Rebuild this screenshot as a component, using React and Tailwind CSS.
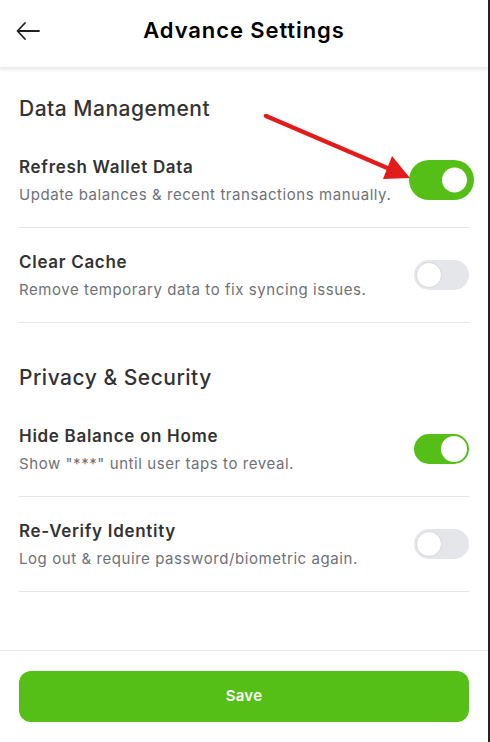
import { useState } from "react";

const FONT = { fontFamily: "Inter, 'Open Sans', sans-serif" };

function Toggle({ on, big, onClick }) {
  return (
    <button
      onClick={onClick}
      className={`relative block shrink-0 rounded-full transition-colors ${big ? "h-[40px] w-[65px]" : "h-[30px] w-[55px]"} ${on ? "bg-[#56bf17]" : "bg-[#e5e6ea]"}`}
    >
      <span
        className={`absolute top-1/2 -translate-y-1/2 rounded-full bg-white ${big ? "h-[25px] w-[25px]" : "h-[26px] w-[26px]"} ${on ? (big ? "right-[7px]" : "right-[2px]") : "left-[2px] border border-[#d8d9de]"}`}
      />
    </button>
  );
}

function Row({ title, desc, on, big, onToggle }) {
  return (
    <div className="flex items-center justify-between border-b border-[#e6e6e6] pt-[22px] pb-[22px]">
      <div>
        <p className="text-[17px] leading-[24px] font-semibold tracking-[0.7px] text-[#333]">{title}</p>
        <p className="mt-[6px] text-[15px] leading-[20px] tracking-[0.57px] text-[#6f7177]">{desc}</p>
      </div>
      <div className={`flex ${big ? "-mr-[5px]" : ""}`}>
        <Toggle on={on} big={big} onClick={onToggle} />
      </div>
    </div>
  );
}

export default function App() {
  const [s, setS] = useState({ refresh: true, cache: false, hide: true, verify: false });
  const flip = k => setS(p => ({ ...p, [k]: !p[k] }));
  return (
    <div style={FONT} className="relative flex h-[742px] w-[490px] flex-col overflow-hidden border-r-2 border-[#222] bg-white">
      <div className="relative z-10 flex h-[68px] shrink-0 items-center justify-center border-b border-[#ececec] pb-[6px] shadow-[0_2px_3px_rgba(0,0,0,0.08)]">
        <svg className="absolute left-[16px] top-[21px]" width="24" height="20" viewBox="0 0 24 20" fill="none" stroke="#222" strokeWidth="1.8" strokeLinecap="round" strokeLinejoin="round">
          <path d="M23 10H2M9 2L1.5 10 9 18" />
        </svg>
        <h1 className="text-[22px] font-semibold tracking-[0.9px] text-black">Advance Settings</h1>
      </div>

      <div className="flex-1 px-[19px]">
        <h2 className="mt-[27px] mb-[10px] text-[21px] leading-[28px] font-medium tracking-[0.5px] text-[#333]">Data Management</h2>
        <Row title="Refresh Wallet Data" desc="Update balances & recent transactions manually." on={s.refresh} big onToggle={() => flip("refresh")} />
        <Row title="Clear Cache" desc="Remove temporary data to fix syncing issues." on={s.cache} onToggle={() => flip("cache")} />

        <h2 className="mt-[41px] mb-[10px] text-[21px] leading-[28px] font-medium tracking-[0.5px] text-[#333]">Privacy &amp; Security</h2>
        <Row title="Hide Balance on Home" desc={'Show "***" until user taps to reveal.'} on={s.hide} onToggle={() => flip("hide")} />
        <Row title="Re-Verify Identity" desc="Log out & require password/biometric again." on={s.verify} onToggle={() => flip("verify")} />
      </div>

      <div className="shrink-0 border-t border-[#e6e6e6] px-[19px] pt-[20px] pb-[20px]">
        <button className="h-[51px] w-full rounded-[12px] bg-[#56bf17] text-[15px] font-semibold tracking-[0.3px] text-white">Save</button>
      </div>

      <svg className="pointer-events-none absolute left-0 top-0" width="490" height="742">
        <line x1="266" y1="116" x2="392" y2="170" stroke="#e21b1b" strokeWidth="4.5" strokeLinecap="round" />
        <polygon points="410,178 383,179 392,156" fill="#e21b1b" />
      </svg>
    </div>
  );
}
